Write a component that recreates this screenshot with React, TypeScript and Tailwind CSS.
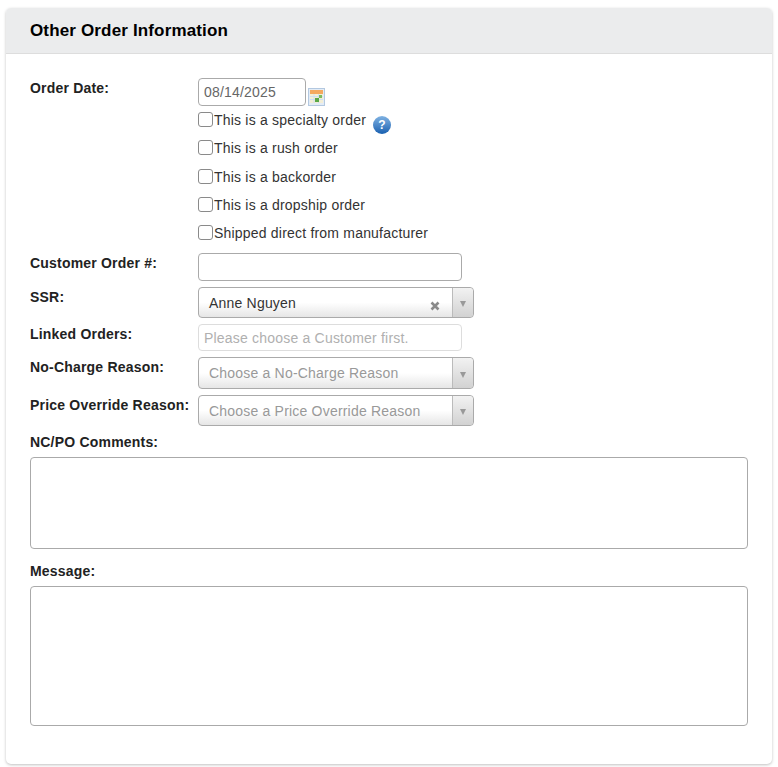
const checks = [
    "This is a specialty order",
    "This is a rush order",
    "This is a backorder",
    "This is a dropship order",
    "Shipped direct from manufacturer",
];

function Caret() {
    return (
        <span className="flex w-[21px] shrink-0 items-center justify-center self-stretch rounded-r-[4px] border-l border-[#bbbbbb] bg-gradient-to-b from-[#f2f2f2] to-[#d2d2d2]">
            <span className="mt-[3px] h-0 w-0 border-x-[3.5px] border-t-[6px] border-x-transparent border-t-[#999999]" />
        </span>
    );
}

function Combo({text, muted, clear, height}: {text: string; muted?: boolean; clear?: boolean; height: string}) {
    return (
        <div className={`flex w-[276px] items-stretch rounded-[4px] border border-[#aaaaaa] bg-gradient-to-b from-white from-50% to-[#e6e6e6] ${height}`}>
            <span className={`flex-1 pl-[10px] pt-[6px] text-[14px] leading-[18px] tracking-[0.2px] ${muted ? "text-[#999999]" : "text-[#333333]"}`}>
                {text}
            </span>
            {clear && (
                <svg viewBox="0 0 10 10" className="mr-[12px] mt-[13px] h-[10px] w-[10px]">
                    <path d="M1.5 1.5 8.5 8.5M8.5 1.5 1.5 8.5" stroke="#8a8a8a" strokeWidth="2.6" />
                </svg>
            )}
            <Caret />
        </div>
    );
}

function Label({children, className = ""}: {children: string; className?: string}) {
    return <div className={`w-[168px] shrink-0 text-[14px] font-bold leading-[18px] tracking-[0.2px] text-[#222222] ${className}`}>{children}</div>;
}

function CalendarIcon() {
    return (
        <svg viewBox="0 0 17 18" className="ml-[2px] h-[18px] w-[17px] shrink-0 self-end">
            <rect x="0.5" y="0.5" width="16" height="17" fill="#e3ecf6" stroke="#b3c8e0" />
            <rect x="2" y="2" width="13" height="4" fill="#f4a95e" />
            <rect x="2" y="6" width="13" height="9" fill="#f3eed6" />
            <path d="M2 8.5h13M2 11.5h13M6 6v9M10.500 6v9" stroke="#cfe0ee" strokeWidth="1" />
            <rect x="7" y="10" width="4" height="4" fill="#5aa845" />
            <rect x="11" y="7" width="3" height="3" fill="#7dbb5f" />
        </svg>
    );
}

function HelpIcon() {
    return (
        <span className="ml-[7px] mt-[4px] flex h-[18px] w-[18px] items-center justify-center rounded-full bg-gradient-to-b from-[#7fb2e2] to-[#1660b0] text-[12px] font-bold leading-none text-white">
            ?
        </span>
    );
}

export default function App() {
    return (
        <div className="h-[767px] bg-white pl-[6px] pt-[8px] font-['Liberation_Sans',Arial,sans-serif]">
            <div className="h-[756px] w-[766px] overflow-hidden rounded-[5px] bg-white shadow-[0_1px_3px_rgba(0,0,0,0.25)]">
                <div className="flex h-[46px] items-center border-b border-[#dddddd] bg-[#ebeced] pl-[24px]">
                    <h2 className="text-[17px] font-bold leading-[20px] tracking-[0.15px] text-black">Other Order Information</h2>
                </div>

                <div className="px-[24px] pt-[24px]">
                    <div className="flex">
                        <Label className="pt-[1px]">Order Date:</Label>
                        <div>
                            <div className="flex">
                                <input
                                    readOnly
                                    value="08/14/2025"
                                    className="h-[28px] w-[108px] rounded-[4px] border border-[#aaaaaa] px-[5px] text-[14px] tracking-[0.2px] text-[#666666] outline-none"
                                />
                                <CalendarIcon />
                            </div>
                            <div className="mt-[6px] flex flex-col">
                                {checks.map((label, i) => (
                                    <label key={label} className="flex h-[28.25px] items-start text-[14px] leading-[16px] tracking-[0.2px] text-[#333333]">
                                        <span className="mr-[1px] h-[15px] w-[15px] shrink-0 rounded-[3px] border-[1.5px] border-[#8a8a8a] bg-white" />
                                        <span>{label}</span>
                                        {i === 0 && <HelpIcon />}
                                    </label>
                                ))}
                            </div>
                        </div>
                    </div>

                    <div className="flex">
                        <Label className="pt-[1px]">Customer Order #:</Label>
                        <input className="h-[28px] w-[264px] rounded-[4px] border border-[#aaaaaa] outline-none" />
                    </div>

                    <div className="mt-[6px] flex">
                        <Label className="pt-[1px]">SSR:</Label>
                        <Combo text="Anne Nguyen" clear height="h-[31px]" />
                    </div>

                    <div className="mt-[6px] flex">
                        <Label className="pt-[1px]">Linked Orders:</Label>
                        <input
                            disabled
                            placeholder="Please choose a Customer first."
                            className="h-[27px] w-[264px] rounded-[4px] border border-[#dddddd] bg-white px-[5px] text-[14px] tracking-[0.2px] outline-none placeholder:text-[#b0b0b0]"
                        />
                    </div>

                    <div className="mt-[6px] flex">
                        <Label className="pt-[1px]">No-Charge Reason:</Label>
                        <Combo text="Choose a No-Charge Reason" muted height="h-[32px]" />
                    </div>

                    <div className="mt-[6px] flex">
                        <Label className="pt-[1px]">Price Override Reason:</Label>
                        <Combo text="Choose a Price Override Reason" muted height="h-[31px]" />
                    </div>

                    <div className="mt-[7px]">
                        <Label className="w-auto">NC/PO Comments:</Label>
                        <textarea className="mt-[6px] block h-[92px] w-[718px] resize-none rounded-[4px] border border-[#aaaaaa] outline-none" />
                    </div>

                    <div className="mt-[13px]">
                        <Label className="w-auto">Message:</Label>
                        <textarea className="mt-[6px] block h-[140px] w-[718px] resize-none rounded-[4px] border border-[#aaaaaa] outline-none" />
                    </div>
                </div>
            </div>
        </div>
    );
}
